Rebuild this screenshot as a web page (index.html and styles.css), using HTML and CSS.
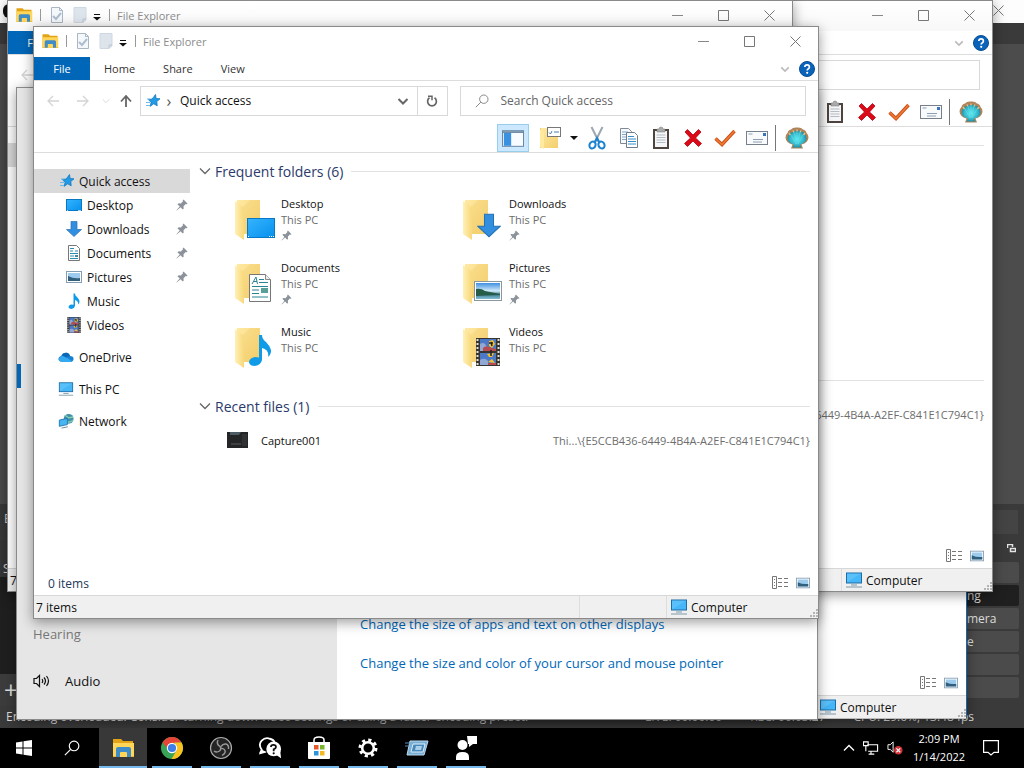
FILE: index.html
```html
<!DOCTYPE html>
<html lang="en">
<head>
<meta charset="utf-8">
<title>Desktop</title>
<link rel="stylesheet" href="styles.css">
</head>
<body>
<svg class="defs" aria-hidden="true">
  <defs>
    <linearGradient id="gFolder" x1="0" x2="1" y2="1"><stop offset="0" stop-color="#ffe9a3"/><stop offset="1" stop-color="#f3cf6b"/></linearGradient>
    <linearGradient id="gFlap" x1="0" x2="1"><stop offset="0" stop-color="#fff0b8"/><stop offset="1" stop-color="#f8d878"/></linearGradient>
    <linearGradient id="gBlue" x2="1" y2="1"><stop offset="0" stop-color="#36b4ff"/><stop offset="1" stop-color="#0591ec"/></linearGradient>
    <linearGradient id="gSky" x2="0" y2="1"><stop offset="0" stop-color="#3f8fe0"/><stop offset=".5" stop-color="#d3ecfa"/><stop offset=".7" stop-color="#3c7c8c"/><stop offset="1" stop-color="#83bfd8"/></linearGradient>
    <radialGradient id="gShell"><stop offset="0" stop-color="#55e6ee"/><stop offset=".7" stop-color="#34b9cd"/><stop offset="1" stop-color="#1d8ea8"/></radialGradient>
  </defs>
  <symbol id="i-explorer" viewBox="0 0 24 24"><path d="M2 3h8l2 2h10v16H2z" fill="#e3a316"/><path d="M2 7h21v14H2z" fill="#ffd658"/><path d="M5 21v-8q0-2 2-2h11q2 0 2 2v8h-4v-4q0-1-1-1h-5q-1 0-1 1v4z" fill="#3f8cc8"/><path d="M2 20h3v1H2zM20 20h3v1h-3z" fill="#f0b92d"/></symbol>
  <symbol id="i-props" viewBox="0 0 14 16"><path d="M1.500.500h8l3 3v12h-11z" fill="#f4f8fb" stroke="#a9b6c3"/><path d="M9.500.500v3h3" fill="none" stroke="#a9b6c3"/><path d="M3 9l3 3 5-6" fill="none" stroke="#aebdd0" stroke-width="2"/></symbol>
  <symbol id="i-new" viewBox="0 0 14 16"><path d="M1 .5h12V13l-3 2.500H1z" fill="#dde4ec" stroke="#cfd8e2"/><path d="M13 12h-3v3" fill="none" stroke="#b9c5d2"/></symbol>
  <symbol id="i-custom" viewBox="0 0 8 8"><path d="M1 1h6v1H1zM0 4h8L4 7.500z" fill="#111"/></symbol>
  <symbol id="i-min" viewBox="0 0 11 11"><path d="M0 5.500h11" stroke="#888"/></symbol>
  <symbol id="i-max" viewBox="0 0 11 11"><path d="M.5.500h10v10H.5z" fill="none" stroke="#777"/></symbol>
  <symbol id="i-close" viewBox="0 0 11 11"><path d="M.5.500l10 10M10.500.500l-10 10" fill="none" stroke="#777"/></symbol>
  <symbol id="i-chev" viewBox="0 0 12 12"><path d="M1 3.500l5 5 5-5" fill="none" stroke="currentColor" stroke-width="1.300"/></symbol>
  <symbol id="i-chevbold" viewBox="0 0 12 12"><path d="M1.500 4L6 8.500 10.500 4" fill="none" stroke="currentColor" stroke-width="2"/></symbol>
  <symbol id="i-help" viewBox="0 0 16 16"><circle cx="8" cy="8" r="7.500" fill="#0a63b8" stroke="#084e93"/><path d="M5.800 6q.1-2.200 2.300-2.200T10.400 6q0 1.200-1.300 1.900-.9.500-.9 1.600" fill="none" stroke="#fff" stroke-width="1.700"/><circle cx="8.200" cy="11.800" r="1.100" fill="#fff"/></symbol>
  <symbol id="i-left" viewBox="0 0 12 12"><path d="M12 6H1.500M6 1L1 6l5 5" fill="none" stroke="currentColor" stroke-width="1.300"/></symbol>
  <symbol id="i-right" viewBox="0 0 12 12"><path d="M0 6h10.500M6 1l5 5-5 5" fill="none" stroke="currentColor" stroke-width="1.300"/></symbol>
  <symbol id="i-up" viewBox="0 0 12 12"><path d="M6 12V1.500M1 6.500L6 1l5 5.500" fill="none" stroke="#666" stroke-width="1.800"/></symbol>
  <symbol id="i-star" viewBox="0 0 16 16"><path d="M10.500 1.500l.6 4 3.900.3-3.200 2.700.4 4.300-3.500-2-3.500 2.500.9-4-2.800-2.800 3.900-.5z" fill="#209be6" stroke="#1777bd" stroke-width=".8"/><path d="M1 9.500h4M1 12.500h4M2 6h3" stroke="#6bbbed"/></symbol>
  <symbol id="i-refresh" viewBox="0 0 12 12"><path d="M8.500 2.800a4.400 4.400 0 1 1-5 0" fill="none" stroke="#666" stroke-width="1.700"/><path d="M2 1.300h4v4" fill="none" stroke="#666" stroke-width="1.500"/></symbol>
  <symbol id="i-search" viewBox="0 0 14 14"><circle cx="8.800" cy="5.200" r="4.200" fill="none" stroke="currentColor"/><path d="M5.800 8.200L.8 13.200" stroke="currentColor"/></symbol>
  <symbol id="i-pane" viewBox="0 0 24 18"><rect x=".5" y=".5" width="23" height="17" fill="#f8fbff" stroke="#5f7f9c"/><path d="M1 1h22v2H1z" fill="#6f8da8"/><path d="M2 3h8v14H2z" fill="#3a91e0"/></symbol>
  <symbol id="i-folderopt" viewBox="0 0 22 22"><path d="M1 1h8v20H1z" fill="#f3ce62"/><path d="M2 1h12v9h5v11H2z" fill="url(#gFolder)"/><path d="M1 2l4 4v16l-4-2z" fill="#ffeaa0"/><rect x="8.500" y=".5" width="13" height="9" fill="#fff" stroke="#777"/><path d="M10 5.500l1.500 1.500L13 4M15 5h5" fill="none" stroke="#4d7daa"/></symbol>
  <symbol id="i-cut" viewBox="0 0 18 24"><path d="M3.500 1l7.500 15M14.500 1L7 16" stroke="#9ba7b3" stroke-width="2"/><ellipse cx="4.500" cy="19" rx="3" ry="3.600" fill="none" stroke="#1c83cf" stroke-width="2" transform="rotate(25 4.500 19)"/><ellipse cx="13.500" cy="19" rx="3" ry="3.600" fill="none" stroke="#1c83cf" stroke-width="2" transform="rotate(-25 13.500 19)"/><path d="M7 16l2-4 2 4" fill="none" stroke="#1c83cf" stroke-width="2"/></symbol>
  <symbol id="i-copy" viewBox="0 0 20 22"><path d="M1.500 1.500h8l3 3v12h-11z" fill="#f8fafc" stroke="#7e8a96"/><path d="M3 5h6M3 7.500h5M3 10h5M3 12.500h5" stroke="#7fa8cf"/><path d="M7.500 5.500h8l3 3v12h-11z" fill="#fff" stroke="#6e7d8c"/><path d="M9 9.500h6M9 12h8M9 14.500h8M9 17h8" stroke="#3b8bc9"/></symbol>
  <symbol id="i-paste" viewBox="0 0 18 24"><rect x="1" y="3" width="16" height="20" fill="#4e443f"/><path d="M3 5h12v16H3z" fill="#f5f6f7"/><path d="M4.500 9h9M4.500 11.500h9M4.500 14h9M4.500 16.500h9" stroke="#b5bcc3"/><path d="M5 3h2q0-2 2-2t2 2h2v3H5z" fill="#aaa" stroke="#777" stroke-width=".5"/></symbol>
  <symbol id="i-delete" viewBox="0 0 20 20"><path d="M2 4l2.500-2.500L10 7l5.500-5.500L18 4l-5.500 6 6 5.500-3 3L10 13l-5.500 5.500-3-3 6-5.500z" fill="#db0a18" stroke="#b5000f" stroke-width=".8"/></symbol>
  <symbol id="i-check" viewBox="0 0 22 18"><path d="M1.500 9.500L8 15.500 20.500 2" fill="none" stroke="#c94e17" stroke-width="3.400"/><path d="M1.500 9.500L8 15.500 20.500 2" fill="none" stroke="#f07a32" stroke-width="1.600"/></symbol>
  <symbol id="i-mail" viewBox="0 0 22 14"><rect x=".5" y=".5" width="21" height="13" fill="#f9fafc" stroke="#77808a"/><path d="M2.500 3h4M7 8.500h10M7 11h9" stroke="#8f9eae"/><path d="M17 2h3v3h-3z" fill="#3774bb"/></symbol>
  <symbol id="i-shell" viewBox="0 0 24 22"><path d="M6 21.500l1.500-4Q1 16 .5 10.500q0-3 2-4.500.5-3 3.500-3.500Q8 0 12 .5q4-.5 6 2 3 .5 3.500 3.500 2 1.500 2 4.500-.5 5.500-7 7l1.500 4z" fill="#b08358"/><path d="M7.500 20.500l1.500-3Q2.500 16 2.500 11 4 4 12 3.500T21.500 11Q21.500 16 15 17.500l1.500 3z" fill="url(#gShell)"/><path d="M11 17L6 8m5 9L9.500 6M12 17V5m1 12l1.500-11M13 17l5-9" stroke="#78eaf0" stroke-width=".7" opacity=".6"/><path d="M4 6l1.500 2M8 3.500l1 2M12 2.500v2M16 3.500l-1 2M20 6l-1.500 2" stroke="#e7bd84" stroke-width="1.500"/></symbol>
  <symbol id="i-desktop" viewBox="0 0 16 14"><rect x=".5" y="1.500" width="15" height="11" fill="url(#gBlue)" stroke="#0878c4"/><path d="M1 12.500h1m10 0h3" stroke="#fff" stroke-dasharray=".7 .5"/></symbol>
  <symbol id="i-bigdesk" viewBox="0 0 28 20"><rect x=".5" y=".5" width="27" height="19" fill="url(#gBlue)" stroke="#0878c4"/><path d="M1 18.500h2M22 18.500h5" stroke="#fff" stroke-dasharray="1 1"/></symbol>
  <symbol id="i-down" viewBox="0 0 16 16"><path d="M5 .5h6v8h4.500L8 15.500.5 8.500H5z" fill="#328fdf" stroke="#2472b7" stroke-width=".7"/></symbol>
  <symbol id="i-doc" viewBox="0 0 14 16"><path d="M1.500.500h8l3 3v12h-11z" fill="#fff" stroke="#777"/><path d="M3 3.500h4M3 6h3m2 0h3M3 8.500h8M3 11h4M3 13.500h8" stroke="#2f8cae" stroke-width="1.200"/><path d="M8 10h3v2H8z" fill="#4c8597"/></symbol>
  <symbol id="i-pic" viewBox="0 0 28 20"><rect x=".5" y=".5" width="27" height="19" fill="#fff" stroke="#8b969e"/><path d="M2 2h24v16H2z" fill="url(#gSky)"/><path d="M2 8q5-1 9 2l15 3v1l-14 .5L2 15z" fill="#275d48"/></symbol>
  <symbol id="i-picsm" viewBox="0 0 16 12"><rect x=".5" y=".5" width="15" height="11" fill="#fff" stroke="#849eb4"/><path d="M2 2h12v8H2z" fill="#9ccbed"/><path d="M2 5q6 3 12 2v3H2z" fill="#315f7c"/></symbol>
  <symbol id="i-note" viewBox="0 0 22 32"><path d="M10 1h3q0 4 4 7 4 4 5 8 .5 4-3 7 1.500-7-6-9v12q-1 5-7 6-5 0-6-3.500Q0 24 6 23q2 0 4 .5z" fill="#109be9"/></symbol>
  <symbol id="i-film" viewBox="0 0 24 28"><path d="M0 0h24v28H0z" fill="#38342f"/><path d="M1.500 1v26M22.500 1v26" stroke="#e2e0da" stroke-width="2" stroke-dasharray="2 2"/><path d="M4 1h16v12H4zM4 15h16v12H4z" fill="#4c79c7"/><path d="M4 6q3-2 5 0l2 3v4H4zM4 22q5-3 8 1v4H4z" fill="#92a8d4"/><path d="M7 10q3-3 6-1l7 2v2H7zM12 25h8v2h-8z" fill="#b84b4d"/><path d="M13 3l4-1 2 4-3 4-3-2zM11 16l7-1-2 4h-3zM12 24l4-3 3 4z" fill="#f2c02c"/><path d="M15 4l1 4m-3-3h4m-2 7v6" stroke="#222" stroke-width="1.500"/></symbol>
  <symbol id="i-cloud" viewBox="0 0 18 12"><path d="M3 11Q.5 10.500.5 8T3.500 5Q5 1 9 1.200T13.500 5q4 0 4 3t-3 3.500z" fill="#1680d4"/><path d="M3 5.200q4-1 6 1l7 4.500-1 .8H4Q.6 11 .6 8.200z" fill="#35a9ef"/><path d="M4 4.500Q6 1 9.500 1.200q3 .2 4 3.800-3 .5-4.500 1.500-2-2-5-2z" fill="#0967b5"/></symbol>
  <symbol id="i-pc" viewBox="0 0 18 17"><rect x="1.500" y="1.500" width="15" height="10" fill="#45b6f8" stroke="#1c6ca5"/><path d="M2 2h14L2 11z" fill="#8ad6ff" opacity=".3"/><path d="M6 13.500h6M1 15.500h16" stroke="#7c99aa"/></symbol>
  <symbol id="i-net" viewBox="0 0 18 17"><circle cx="12" cy="6" r="5.500" fill="#438fa8"/><path d="M8 2l4 3 5-1M7 7l5 3 5-2" stroke="#83d1b4" fill="none" stroke-width="1.500"/><path d="M1.500 7.500l9-2v7l-9 2z" fill="#46b5f4" stroke="#1f74ad"/><path d="M4 16.500l7-1.500" stroke="#5f8195"/></symbol>
  <symbol id="i-pin" viewBox="0 0 12 12"><path d="M7.500.500l4 4-1 .8-.8-.3L7.500 7.200l.2 2.300-1 1L4.500 8.300.8 11.500l-.3-.3L3.700 7.500 1.500 5.300l1-1 2.300.2L7 2.300l-.3-.8z" fill="#8b9299"/></symbol>
  <symbol id="i-folder" viewBox="0 0 28 42"><path d="M3 1h23v34H3z" fill="url(#gFolder)"/><path d="M8 9l8-8h10v34H8z" fill="#f0c963" opacity=".25"/><path d="M1 2l9 7v32l-9-6z" fill="url(#gFlap)"/></symbol>
  <symbol id="i-bigdoc" viewBox="0 0 22 28"><path d="M.5.500h16l5 5v22H.5z" fill="#fff" stroke="#777"/><path d="M16.500.500v5h5" fill="#eee" stroke="#888"/><path d="M3 10l4-7 1.500 7M4.500 7.500H8M10 5.500h5M10 8.500h9M3 12.500h16M3 16h7M3 19.500h7M3 23h16" fill="none" stroke="#2a8493"/><path d="M12 14h7v5h-7z" fill="#5c9e9a"/></symbol>
  <symbol id="i-capture" viewBox="0 0 22 17"><path d="M0 0h21v16H0z" fill="#232527"/><path d="M3 0h11l-2 3H3z" fill="#4c5c62"/><path d="M4 12h10" stroke="#5b5d5e"/><path d="M15 2h5v12h-5z" fill="#303335"/></symbol>
  <symbol id="i-list" viewBox="0 0 17 14"><path d="M.5.500h4v12h-4z" fill="none" stroke="#777"/><path d="M2 3.500h1m-1 3h1m-1 3h1" stroke="#777"/><path d="M6 2.500h4m2 0h4M6 6.500h4m2 0h4M6 10.500h4m2 0h4" stroke="#777"/></symbol>
  <symbol id="i-grip" viewBox="0 0 10 10"><path d="M8 1h2v2H8zM5 4h2v2H5zM8 4h2v2H8zM2 7h2v2H2zM5 7h2v2H5zM8 7h2v2H8z" fill="#b3b3b3"/></symbol>
  <symbol id="i-sound" viewBox="0 0 18 16"><path d="M1 5.500h2.500L6.500 2.500v11L3.500 10.500H1zM9 6q1.500 2 0 4M11 4.500q3 3.500 0 7M13.500 3q4 5 0 10" fill="none" stroke="#111" stroke-width="1.200"/></symbol>
  <symbol id="i-win" viewBox="0 0 16 16"><path d="M0 2.500l6.500-1v6H0zM7.500 1.300L16 0v7.500H7.500zM0 8.500h6.500v6l-6.500-1zM7.500 8.500H16V16l-8.500-1.300z" fill="#fff"/></symbol>
  <symbol id="i-chrome" viewBox="0 0 24 24"><circle cx="12" cy="12" r="11" fill="#38a455"/><path d="M2.500 6.500A11 11 0 0 1 21.500 6.500L12 7q-4 0-5 5z" fill="#e54536"/><path d="M21.500 6.500A11 11 0 0 1 11.500 23l5-8.500Q18 10 14 6.500z" fill="#fbc21d"/><circle cx="12" cy="12" r="5.200" fill="#fff"/><circle cx="12" cy="12" r="4.100" fill="#3d7ee8"/></symbol>
  <symbol id="i-obs" viewBox="0 0 24 24"><circle cx="12" cy="12" r="10.500" fill="#242424" stroke="#aaa" stroke-width="1.200"/><path d="M9 4q-2 4 2 6.500 2 2.500-.5 4.500-3 2-5.500 0M12 10.500q2-3 5-2.500 3 1 2.500 5M12 12.500q3-.5 4 2t-3 5" fill="none" stroke="#999" stroke-width="1.400"/></symbol>
  <symbol id="i-ask" viewBox="0 0 26 24"><path d="M2 18l2-4Q0 8 4 4t9-2q4 1 5 4" fill="none" stroke="#fff" stroke-width="2"/><path d="M1 19l3-5 5 2v1z" fill="#fff"/><circle cx="17" cy="13" r="8" fill="#fff"/><path d="M19 19l6 4-1-8z" fill="#fff"/><path d="M14 11q0-2.500 2.700-2.500T19.500 11q0 1.500-2.500 2.500v2" fill="none" stroke="#111" stroke-width="1.900"/><circle cx="17" cy="17.800" r="1.200" fill="#111"/></symbol>
  <symbol id="i-store" viewBox="0 0 24 24"><path d="M7 7V4q0-3 5-3t5 3v3" fill="none" stroke="#fff" stroke-width="1.500"/><path d="M1 6h22v16q0 1-1 1H2q-1 0-1-1z" fill="#fff"/><path d="M7 9h4.500v4.500H7z" fill="#e7582f"/><path d="M13 9h4.500v4.500H13z" fill="#78b52c"/><path d="M7 15h4.500v4.500H7z" fill="#2796dd"/><path d="M13 15h4.500v4.500H13z" fill="#f5b820"/></symbol>
  <symbol id="i-gear" viewBox="0 0 20 20"><circle cx="10" cy="10" r="5.800" fill="none" stroke="#fff" stroke-width="2.600"/><circle cx="10" cy="10" r="8" fill="none" stroke="#fff" stroke-width="3" stroke-dasharray="3.140 3.140"/></symbol>
  <symbol id="i-run" viewBox="0 0 24 18"><path d="M5 2h18l-4 14H2z" fill="#78add4" stroke="#bcd9ec"/><path d="M8 5h12l-2 8H6z" fill="#4b88ba" stroke="#dceefa"/><path d="M11 7h6l-1 4h-6z" fill="#a9d0eb"/><path d="M0 4h5M0 7h4" stroke="#568cba"/></symbol>
  <symbol id="i-person" viewBox="0 0 22 24"><circle cx="7.500" cy="9" r="5" fill="#fff"/><path d="M1 24v-3q0-5 6.500-5t6.500 5v3zM12 0h10v8h-4l-4 3V8h-1z" fill="#fff"/></symbol>
  <symbol id="i-ethernet" viewBox="0 0 17 14"><path d="M4.500 3.500h11v7h-10M8.500 10.500v3M6 13.500h6M.5.500h5v4h-5zM3 4.500v6" fill="none" stroke="#fff" stroke-width="1.200"/></symbol>
  <symbol id="i-mute" viewBox="0 0 17 15"><path d="M1 4h2.500L6.500 1v11L3.500 9H1z" fill="none" stroke="#fff"/><circle cx="12" cy="10" r="4.500" fill="#d13438"/><path d="M10 8l4 4m0-4l-4 4" stroke="#fff" stroke-width="1.200"/></symbol>
  <symbol id="i-action" viewBox="0 0 16 16"><path d="M.6.600h14.800v11.800H11L8 15l-3-2.600H.6z" fill="none" stroke="#fff" stroke-width="1.200"/></symbol>
  <symbol id="i-float" viewBox="0 0 9 9"><path d="M.5 4V.5h5V3M3.500 4.500h5v3h-5z" fill="none" stroke="#e3e3e3" stroke-width="1.500"/></symbol>
</svg>

<div class="screen">
  <main class="desktop">
    <section class="recorder" aria-label="Recorder">
      <header class="recorder-title"><span class="recorder-logo"></span><button class="plain" aria-label="Close recorder"><svg class="s11"><use href="#i-close"/></svg></button></header>
      <div class="recorder-menu"></div>
      <div class="recorder-preview"></div>
      <div class="recorder-tools"><span>E</span><span class="tool-tip"></span></div>
      <div class="recorder-docks">
        <div class="dock-left"><b class="dock-name">S</b><div class="dock-list"></div><button class="dock-add" aria-label="Add scene">+</button></div>
        <div class="dock-right">
          <div class="dock-head"><svg class="s9"><use href="#i-float"/></svg></div>
          <button class="dock-button"></button><button class="dock-button dark">ng</button><button class="dock-button">mera</button><button class="dock-button">e</button><button class="dock-button"></button><button class="dock-button"></button>
        </div>
      </div>
      <footer class="recorder-status"><span class="status-message">Encoding overloaded! Consider turning down video settings or using a faster encoding preset.</span><span>LIVE: 00:00:00</span><span>REC: 00:03:27</span><span>CPU: 29.6%, 13.48 fps</span></footer>
    </section>

    <section class="window win-lower" aria-label="File Explorer 4">
      <div class="spacer"></div>
      <div class="details"><span></span><span class="views"><svg class="list"><use href="#i-list"/></svg><svg class="thumb"><use href="#i-picsm"/></svg></span></div>
      <footer class="statusbar"><span class="status-computer"><svg class="s18"><use href="#i-pc"/></svg>Computer</span><svg class="grip"><use href="#i-grip"/></svg></footer>
    </section>

    <section class="window win-right" aria-label="File Explorer 3">
      <header class="titlebar"><span class="fill"></span><button class="caption" aria-label="Minimize"><svg class="s11"><use href="#i-min"/></svg></button><button class="caption" aria-label="Maximize"><svg class="s11"><use href="#i-max"/></svg></button><button class="caption" aria-label="Close"><svg class="s11"><use href="#i-close"/></svg></button></header>
      <div class="tabs"><span class="fill"></span><svg class="s12 collapse"><use href="#i-chevbold"/></svg><svg class="s16"><use href="#i-help"/></svg></div>
      <div class="navbar"><span class="fill"></span><div class="search"></div></div>
      <div class="toolbar"><button class="tool" aria-label="Paste"><svg class="t-paste"><use href="#i-paste"/></svg></button><button class="tool" aria-label="Delete"><svg class="t20"><use href="#i-delete"/></svg></button><button class="tool" aria-label="Rename"><svg class="t-check"><use href="#i-check"/></svg></button><button class="tool" aria-label="Properties"><svg class="t-mail"><use href="#i-mail"/></svg></button><span class="bar"></span><button class="tool" aria-label="Shell"><svg class="t-shell"><use href="#i-shell"/></svg></button></div>
      <div class="body"><div class="content"><h2 class="group"><span class="rule"></span></h2><div class="folder-space"></div><h2 class="group"><span class="rule"></span></h2><div class="recent"><span class="fill"></span><span class="path">Thi...\{E5CCB436-6449-4B4A-A2EF-C841E1C794C1}</span></div></div></div>
      <div class="details"><span></span><span class="views"><svg class="list"><use href="#i-list"/></svg><svg class="thumb"><use href="#i-picsm"/></svg></span></div>
      <footer class="statusbar"><span class="status-computer"><svg class="s18"><use href="#i-pc"/></svg>Computer</span><svg class="grip"><use href="#i-grip"/></svg></footer>
    </section>

    <section class="window win-left" aria-label="File Explorer 2">
      <header class="titlebar"><svg class="app"><use href="#i-explorer"/></svg><i class="sep"></i><svg class="quick"><use href="#i-props"/></svg><svg class="quick"><use href="#i-new"/></svg><svg class="s8"><use href="#i-custom"/></svg><i class="sep last"></i><span class="title">File Explorer</span><span class="fill"></span><button class="caption" aria-label="Minimize"><svg class="s11"><use href="#i-min"/></svg></button><button class="caption" aria-label="Maximize"><svg class="s11"><use href="#i-max"/></svg></button><button class="caption" aria-label="Close"><svg class="s11"><use href="#i-close"/></svg></button></header>
      <div class="tabs"><button class="tab file">File</button></div>
      <div class="navbar"><button class="nav off" aria-label="Back"><svg class="s12"><use href="#i-left"/></svg></button></div>
      <div class="toolbar"></div>
      <div class="body"><nav class="side"><span class="side-item current"></span></nav></div>
      <footer class="statusbar"><span>7 items</span></footer>
    </section>

    <section class="window win-settings" aria-label="Settings">
      <nav class="settings-nav"><span class="marker"></span><h2 class="settings-group">Hearing</h2><a class="settings-link" href="#"><svg class="s18"><use href="#i-sound"/></svg>Audio</a></nav>
      <div class="settings-main"><a href="#">Change the size of apps and text on other displays</a><a href="#">Change the size and color of your cursor and mouse pointer</a></div>
    </section>

    <section class="window win-front" aria-label="File Explorer">
      <header class="titlebar"><svg class="app"><use href="#i-explorer"/></svg><i class="sep"></i><svg class="quick"><use href="#i-props"/></svg><svg class="quick"><use href="#i-new"/></svg><svg class="s8"><use href="#i-custom"/></svg><i class="sep last"></i><span class="title">File Explorer</span><span class="fill"></span><button class="caption" aria-label="Minimize"><svg class="s11"><use href="#i-min"/></svg></button><button class="caption" aria-label="Maximize"><svg class="s11"><use href="#i-max"/></svg></button><button class="caption" aria-label="Close"><svg class="s11"><use href="#i-close"/></svg></button></header>
      <div class="tabs"><button class="tab file">File</button><button class="tab">Home</button><button class="tab">Share</button><button class="tab">View</button><span class="fill"></span><svg class="s12 collapse"><use href="#i-chevbold"/></svg><svg class="s16"><use href="#i-help"/></svg></div>
      <div class="navbar">
        <button class="nav off" aria-label="Back"><svg class="s12"><use href="#i-left"/></svg></button><button class="nav off" aria-label="Forward"><svg class="s12"><use href="#i-right"/></svg></button><button class="nav recentnav off" aria-label="Recent locations"><svg class="s8"><use href="#i-chev"/></svg></button><button class="nav upnav" aria-label="Up"><svg class="s12"><use href="#i-up"/></svg></button>
        <div class="address"><svg class="s16"><use href="#i-star"/></svg><span class="crumb">›</span><span>Quick access</span><span class="fill"></span><svg class="s12 drop"><use href="#i-chevbold"/></svg><button class="refresh" aria-label="Refresh"><svg class="s12"><use href="#i-refresh"/></svg></button></div>
        <label class="search"><svg class="s14"><use href="#i-search"/></svg><input type="search" aria-label="Search Quick access" placeholder="Search Quick access"></label>
      </div>
      <div class="toolbar"><button class="tool on" aria-label="Navigation pane"><svg class="t-pane"><use href="#i-pane"/></svg></button><button class="tool options" aria-label="Folder options"><svg class="t22"><use href="#i-folderopt"/></svg><i class="tri"></i></button><button class="tool" aria-label="Cut"><svg class="t-paste"><use href="#i-cut"/></svg></button><button class="tool" aria-label="Copy"><svg class="t22"><use href="#i-copy"/></svg></button><button class="tool" aria-label="Paste"><svg class="t-paste"><use href="#i-paste"/></svg></button><button class="tool" aria-label="Delete"><svg class="t20"><use href="#i-delete"/></svg></button><button class="tool" aria-label="Rename"><svg class="t-check"><use href="#i-check"/></svg></button><button class="tool" aria-label="Properties"><svg class="t-mail"><use href="#i-mail"/></svg></button><span class="bar"></span><button class="tool" aria-label="Shell"><svg class="t-shell"><use href="#i-shell"/></svg></button></div>
      <div class="body">
        <nav class="side">
          <a class="side-item current" href="#"><svg class="s16"><use href="#i-star"/></svg>Quick access</a>
          <a class="side-item child" href="#"><svg class="s16"><use href="#i-desktop"/></svg>Desktop<svg class="pin"><use href="#i-pin"/></svg></a>
          <a class="side-item child" href="#"><svg class="s16"><use href="#i-down"/></svg>Downloads<svg class="pin"><use href="#i-pin"/></svg></a>
          <a class="side-item child" href="#"><svg class="s16"><use href="#i-doc"/></svg>Documents<svg class="pin"><use href="#i-pin"/></svg></a>
          <a class="side-item child" href="#"><svg class="s16"><use href="#i-picsm"/></svg>Pictures<svg class="pin"><use href="#i-pin"/></svg></a>
          <a class="side-item child" href="#"><svg class="s16"><use href="#i-note"/></svg>Music</a>
          <a class="side-item child" href="#"><svg class="s16"><use href="#i-film"/></svg>Videos</a>
          <a class="side-item top" href="#"><svg class="s16"><use href="#i-cloud"/></svg>OneDrive</a>
          <a class="side-item top" href="#"><svg class="s16"><use href="#i-pc"/></svg>This PC</a>
          <a class="side-item top" href="#"><svg class="s16"><use href="#i-net"/></svg>Network</a>
        </nav>
        <div class="content">
          <h2 class="group"><svg class="s12"><use href="#i-chev"/></svg>Frequent folders (6)<span class="rule"></span></h2>
          <div class="folders">
            <a class="folder" href="#"><span class="art"><svg class="base"><use href="#i-folder"/></svg><svg class="over o-desk"><use href="#i-bigdesk"/></svg></span><span class="info"><b>Desktop</b><span>This PC</span><svg class="s10"><use href="#i-pin"/></svg></span></a>
            <a class="folder" href="#"><span class="art"><svg class="base"><use href="#i-folder"/></svg><svg class="over o-down"><use href="#i-down"/></svg></span><span class="info"><b>Downloads</b><span>This PC</span><svg class="s10"><use href="#i-pin"/></svg></span></a>
            <a class="folder" href="#"><span class="art"><svg class="base"><use href="#i-folder"/></svg><svg class="over o-doc"><use href="#i-bigdoc"/></svg></span><span class="info"><b>Documents</b><span>This PC</span><svg class="s10"><use href="#i-pin"/></svg></span></a>
            <a class="folder" href="#"><span class="art"><svg class="base"><use href="#i-folder"/></svg><svg class="over o-pic"><use href="#i-pic"/></svg></span><span class="info"><b>Pictures</b><span>This PC</span><svg class="s10"><use href="#i-pin"/></svg></span></a>
            <a class="folder" href="#"><span class="art"><svg class="base"><use href="#i-folder"/></svg><svg class="over o-note"><use href="#i-note"/></svg></span><span class="info"><b>Music</b><span>This PC</span></span></a>
            <a class="folder" href="#"><span class="art"><svg class="base"><use href="#i-folder"/></svg><svg class="over o-film"><use href="#i-film"/></svg></span><span class="info"><b>Videos</b><span>This PC</span></span></a>
          </div>
          <h2 class="group"><svg class="s12"><use href="#i-chev"/></svg>Recent files (1)<span class="rule"></span></h2>
          <a class="recent" href="#"><svg class="capture"><use href="#i-capture"/></svg><span>Capture001</span><span class="fill"></span><span class="path">Thi...\{E5CCB436-6449-4B4A-A2EF-C841E1C794C1}</span></a>
        </div>
      </div>
      <div class="details"><span>0 items</span><span class="views"><svg class="list"><use href="#i-list"/></svg><svg class="thumb"><use href="#i-picsm"/></svg></span></div>
      <footer class="statusbar"><span>7 items</span><span class="status-mid"></span><span class="status-computer"><svg class="s18"><use href="#i-pc"/></svg>Computer</span><svg class="grip"><use href="#i-grip"/></svg></footer>
    </section>
  </main>

  <footer class="taskbar">
    <button class="start" aria-label="Start"><svg class="s16"><use href="#i-win"/></svg></button>
    <button class="start" aria-label="Search"><svg class="s16 white"><use href="#i-search"/></svg></button>
    <div class="apps">
      <button class="task active" aria-label="File Explorer"><svg class="s24"><use href="#i-explorer"/></svg></button>
      <button class="task" aria-label="Chrome"><svg class="s24"><use href="#i-chrome"/></svg></button>
      <button class="task" aria-label="Recorder"><svg class="s24"><use href="#i-obs"/></svg></button>
      <button class="task" aria-label="Get Help"><svg class="s24"><use href="#i-ask"/></svg></button>
      <button class="task" aria-label="Store"><svg class="s24"><use href="#i-store"/></svg></button>
      <button class="task" aria-label="Settings"><svg class="s20"><use href="#i-gear"/></svg></button>
      <button class="task" aria-label="Run"><svg class="s24"><use href="#i-run"/></svg></button>
      <button class="task" aria-label="Feedback"><svg class="s24"><use href="#i-person"/></svg></button>
    </div>
    <span class="fill"></span>
    <div class="tray"><svg class="s12 trayup"><use href="#i-chev"/></svg><svg class="s16"><use href="#i-ethernet"/></svg><svg class="s16"><use href="#i-mute"/></svg><time class="clock">2:09 PM<br>1/14/2022</time><svg class="s16 action"><use href="#i-action"/></svg></div>
  </footer>
</div>
</body>
</html>
```

FILE: styles.css
```css
* { box-sizing: border-box; }
body { margin: 0; font-family: "Open Sans", "Noto Sans", sans-serif; font-size: 12px; color: #111; }
button { margin: 0; padding: 0; border: 0; background: none; font: inherit; color: inherit; }
a { color: inherit; text-decoration: none; }
h2 { margin: 0; font-weight: 400; }
svg { display: block; flex: none; }
.defs { position: absolute; width: 0; height: 0; }
.fill { flex: 1; }

.s8 { width: 8px; height: 8px; }
.s9 { width: 9px; height: 9px; }
.s10 { width: 11px; height: 11px; }
.s11 { width: 11px; height: 11px; }
.s12 { width: 12px; height: 12px; }
.s14 { width: 14px; height: 14px; }
.s16 { width: 16px; height: 16px; }
.s18 { width: 18px; height: 18px; }
.s20 { width: 20px; height: 20px; }
.s24 { width: 24px; height: 24px; }

.screen { display: flex; flex-direction: column; height: 100vh; overflow: hidden; }
.desktop { position: relative; flex: 1; overflow: hidden; }

/* Recorder application filling the desktop */
.recorder { display: flex; flex-direction: column; height: 100%; background: #3a3a3a; color: #ddd; }
.recorder-title { display: flex; justify-content: space-between; height: 23px; padding: 4px 20px 0 0; background: #fdfdfd; }
.recorder-title .plain { height: 12px; }
.recorder-logo { width: 12px; height: 14px; border-radius: 7px; background: #111; margin-left: 3px; }
.recorder-menu { height: 21px; }
.recorder-preview { flex: 1; background: #4c4c4c; }
.recorder-tools { display: flex; justify-content: space-between; height: 36px; padding: 6px 6px 6px 4px; }
.tool-tip { width: 26px; height: 24px; background: #444; }
.recorder-docks { display: flex; justify-content: space-between; height: 166px; }
.dock-left { display: flex; flex-direction: column; width: 60px; background: #303030; }
.dock-name { padding: 20px 3px 0; font-weight: 400; background: #383838; }
.dock-list { flex: 1; background: #1f1f1f; }
.dock-add { height: 32px; padding-left: 4px; text-align: left; font-size: 24px; line-height: 24px; background: #3c3c3c; }
.dock-right { display: flex; flex-direction: column; gap: 2px; width: 60px; padding-right: 5px; }
.dock-head { display: flex; align-items: flex-start; justify-content: flex-end; height: 20px; padding: 4px 3px 0 0; }
.dock-button { height: 21px; padding-left: 3px; text-align: left; background: #4b4b4b; border-radius: 2px; }
.dock-button.dark { background: #1f1f1f; }
.recorder-status { display: flex; gap: 28px; height: 22px; padding: 0 50px 0 6px; line-height: 22px; white-space: nowrap; }
.status-message { flex: 1; overflow: hidden; }

/* Desktop windows */
.window { position: absolute; display: flex; flex-direction: column; background: #fff; border: 1px solid #8a8a8a; box-shadow: 0 3px 12px rgba(0, 0, 0, .4); }
.win-lower { left: 182px; right: 57px; top: 120px; bottom: 9px; border-color: #bbb; border-right-color: #1666a8; }
.win-right { left: 208px; right: 31px; top: 0; bottom: 136px; }
.win-left { left: 7px; right: 231px; top: 0; bottom: 136px; }
.win-settings { left: 16px; right: 206px; top: 87px; bottom: 8px; flex-direction: row; }
.win-front { left: 33px; right: 205px; top: 26px; bottom: 109px; }
.spacer { flex: 1; }

.titlebar { display: flex; align-items: center; height: 30px; padding: 0 0 2px 7px; }
.app { width: 18px; height: 18px; }
.sep { width: 1px; height: 12px; margin: 0 9px 0 7px; background: #999; }
.sep.last { margin: 0 7px 0 8px; }
.quick { width: 14px; height: 16px; margin-right: 9px; }
.quick + .s8 { margin-left: -3px; margin-top: 3px; }
.title { color: #8c8c8c; font-size: 11px; }
.caption { display: grid; place-items: center; width: 46px; height: 28px; }
.tabs { display: flex; align-items: center; height: 24px; padding-right: 3px; border-bottom: 1px solid #ddd; }
.tab { height: 23px; padding: 0 14px; font-size: 11px; color: #333; }
.tab.file { width: 56px; padding: 0; background: #0067b8; color: #fff; }
.collapse { width: 10px; margin-right: 9px; color: #bbb; }
.navbar { display: flex; align-items: center; height: 39px; padding: 0 12px 0 4px; }
.nav { display: grid; place-items: center; width: 30px; height: 30px; color: #444; }
.nav.off { color: #d4d4d4; }
.nav.recentnav { width: 16px; }
.nav.upnav { width: 24px; }
.navbar .upnav { margin-right: 2px; }
.address { flex: 312; display: flex; align-items: center; height: 30px; padding-left: 4px; border: 1px solid #d9d9d9; }
.crumb { width: 16px; text-align: center; font-size: 16px; line-height: 16px; color: #555; }
.address .crumb { margin-right: 3px; }
.drop { margin-right: 8px; width: 12px; color: #666; }
.refresh { display: grid; place-items: center; width: 30px; height: 28px; border-left: 1px solid #d9d9d9; }
.search { flex: 342; display: flex; align-items: center; gap: 8px; height: 30px; margin-left: 12px; padding-left: 14px; border: 1px solid #d9d9d9; color: #888; }
.search input { flex: 1; min-width: 0; padding: 0 4px; border: 0; outline: 0; background: none; font: inherit; }
.search input::placeholder { color: #666; opacity: 1; }
.toolbar { display: flex; justify-content: flex-end; align-items: flex-end; height: 33px; padding-right: 5px; border-bottom: 1px solid #ddd; }
.tool { display: grid; place-items: center; width: 32px; height: 28px; }
.tool.on { background: #cce8ff; border: 1px solid #99cdec; }
.tool.options { display: flex; align-items: center; gap: 9px; width: 52px; padding-left: 10px; }
.tri { border: 4px solid transparent; border-top-color: #111; border-bottom: 0; }
.t20 { width: 20px; height: 20px; }
.t22 { width: 22px; height: 22px; }
.t-pane { width: 22px; height: 17px; }
.t-paste { width: 18px; height: 24px; }
.t-check { width: 22px; height: 18px; }
.t-mail { width: 22px; height: 14px; }
.t-shell { width: 24px; height: 22px; }
.bar { width: 1px; height: 26px; margin: 0 5px 1px 2px; background: #777; }

.body { flex: 1; display: flex; min-height: 0; }
.side { width: 156px; padding-top: 16px; }
.side-item { display: flex; align-items: center; gap: 4px; height: 24px; padding: 0 2px 0 25px; }
.side-item.child { padding-left: 32px; gap: 5px; }
.side-item.top { padding-left: 24px; margin-top: 8px; gap: 5px; }
.side-item.current { background: #d9d9d9; }
.pin { width: 12px; height: 12px; margin-left: auto; }
.content { flex: 1; padding: 6px 8px 0 9px; }
.group { display: flex; align-items: center; gap: 4px; height: 24px; font-size: 14px; color: #2b3a6b; }
.group svg { color: #666; }
.rule { flex: 1; height: 1px; margin-left: 4px; background: #e2e2e2; }
.folders { display: grid; grid-template-columns: 228px 228px; grid-auto-rows: 64px; padding: 13px 0 6px 36px; }
.folder-space { height: 211px; }
.folder { display: flex; gap: 4px; }
.art { position: relative; width: 42px; height: 48px; }
.base { position: absolute; left: -1px; top: 3px; width: 28px; height: 42px; }
.over { position: absolute; }
.o-desk { left: 12px; top: 22px; width: 28px; height: 20px; }
.o-down { left: 14px; top: 17px; width: 24px; height: 25px; }
.o-doc { left: 14px; top: 14px; width: 22px; height: 28px; }
.o-pic { left: 11px; top: 21px; width: 28px; height: 20px; }
.o-note { left: 14px; top: 10px; width: 22px; height: 32px; }
.o-film { left: 13px; top: 14px; width: 24px; height: 28px; }
.info { display: flex; flex-direction: column; line-height: 16px; color: #6d6d6d; font-size: 11px; }
.info b { font-weight: 400; color: #111; }
.info svg { margin-top: 2px; }
.recent { display: flex; align-items: center; height: 44px; padding-left: 28px; font-size: 11px; }
.capture { width: 22px; height: 17px; margin-right: 12px; }
.path { color: #6d6d6d; white-space: nowrap; }
.details { display: flex; align-items: center; justify-content: space-between; height: 24px; padding: 0 8px 0 14px; color: #1e395b; }
.views { display: flex; align-items: center; gap: 7px; }
.list { width: 17px; height: 14px; }
.thumb { width: 14px; height: 12px; }
.statusbar { display: flex; align-items: center; height: 23px; padding-left: 2px; background: #f0f0f0; border-top: 1px solid #d7d7d7; }
.status-mid { width: 88px; height: 22px; margin-left: auto; border-left: 1px solid #ddd; border-right: 1px solid #ddd; }
.status-computer { display: flex; align-items: center; gap: 3px; width: 141px; height: 22px; padding-left: 3px; border-left: 1px solid #ddd; }
.status-mid + .status-computer { border-left: 0; }
.win-right .status-computer, .win-lower .status-computer { margin-left: auto; }
.grip { width: 10px; height: 10px; align-self: flex-end; }

/* Visible edges of the windows behind */
.win-left .titlebar, .win-right .titlebar { background: linear-gradient(#fff, #f8f8f8); }
.win-left .side-item { margin-right: 10px; }

.settings-nav { display: flex; flex-direction: column; width: 320px; height: 100%; padding: 0 16px 22px; background: #e6e6e6; }
.marker { width: 4px; height: 24px; margin: 276px 0 auto -16px; background: #0067b8; }
.settings-group { font-size: 13px; line-height: 20px; color: #777; }
.settings-link { display: flex; align-items: center; gap: 14px; height: 32px; margin-top: 21px; font-size: 13px; }
.settings-main { flex: 1; display: flex; flex-direction: column; justify-content: flex-end; gap: 19px; padding: 0 24px 46px 23px; font-size: 13px; line-height: 20px; color: #0067b8; }

.taskbar { display: flex; align-items: center; height: 40px; background: #000; color: #fff; }
.start { display: grid; place-items: center; width: 48px; height: 40px; }
.white { color: #fff; }
.apps { display: flex; gap: 9px; margin-left: 3px; }
.task { display: grid; place-items: center; width: 40px; height: 40px; padding-top: 2px; border-bottom: 2px solid #76b9ed; }
.task.active { width: 48px; margin-right: -4px; background: #383838; }
.tray { display: flex; align-items: center; gap: 8px; padding-right: 25px; }
.trayup { transform: rotate(180deg); }
.clock { width: 56px; text-align: center; font-size: 11px; line-height: 18px; }
.action { margin-left: 8px; }
```
